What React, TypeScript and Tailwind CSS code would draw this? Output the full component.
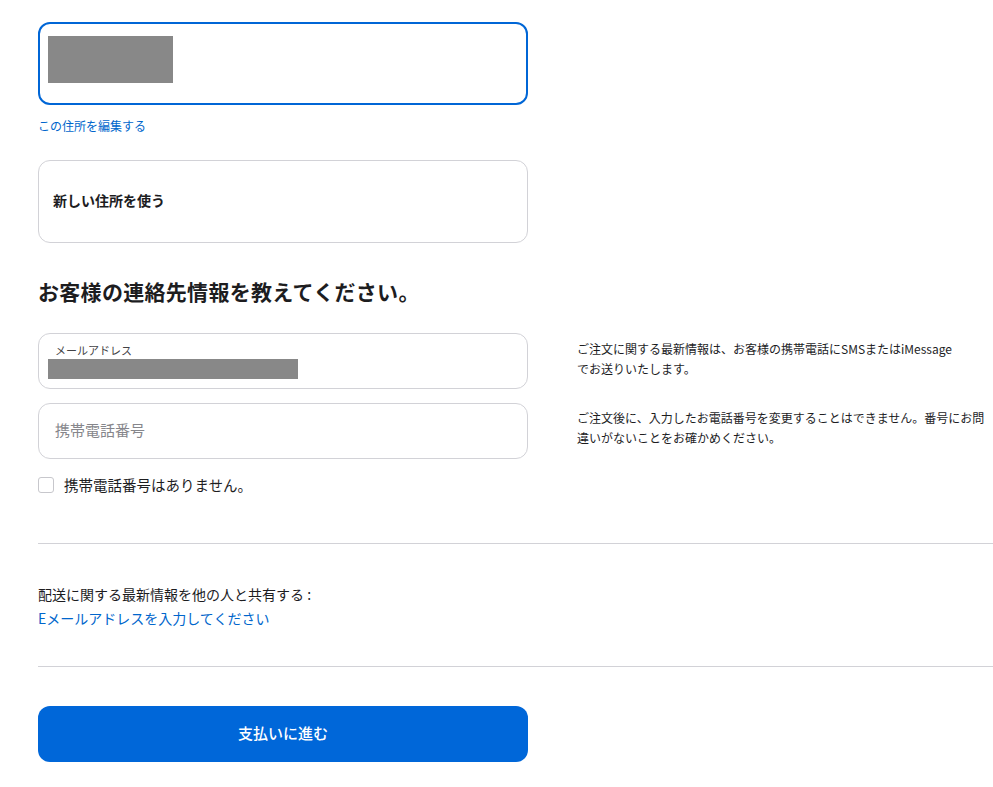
import React from "react";

export default function App() {
  return (
    <div
      className="min-h-[787px] w-[993px] bg-white text-[#1d1d1f]"
      style={{ fontFamily: '"Noto Sans CJK JP", "Noto Sans", sans-serif' }}
    >
      <div className="pl-[38px] pt-[22px]">
        {/* selected address */}
        <div className="h-[83px] w-[490px] rounded-[12px] border-2 border-[#0066d6] pl-[8px] pt-[12px]">
          <div className="h-[47px] w-[125px] bg-[#888888]" />
        </div>
        <div className="mt-[12px] text-[12px] leading-[18px] text-[#0066cc]">この住所を編集する</div>

        {/* new address */}
        <div className="mt-[25px] flex h-[83px] w-[490px] items-center rounded-[12px] border border-[#d2d2d7] pb-[4px] pl-[14px]">
          <span className="text-[14px] font-bold leading-[20px]">新しい住所を使う</span>
        </div>

        <h2 className="mt-[33px] text-[21px] font-bold leading-[30px] tracking-[0.3px]">
          お客様の連絡先情報を教えてください。
        </h2>

        <div className="mt-[27px] grid grid-cols-[490px_1fr] gap-x-[49px] gap-y-[14px]">
          <div className="h-[56px] rounded-[12px] border border-[#d2d2d7] pl-[9px] pt-[9px]">
            <div className="pl-[7px] text-[11px] leading-[14px] text-[#424245]">メールアドレス</div>
            <div className="mt-[2px] h-[20px] w-[250px] bg-[#888888]" />
          </div>
          <div className="pt-[6px] text-[12px] leading-[20px]">
            ご注文に関する最新情報は、お客様の携帯電話にSMSまたはiMessage
            <br />
            でお送りいたします。
          </div>
          <div className="flex h-[56px] items-center rounded-[12px] border border-[#d2d2d7] pb-[2px] pl-[16px]">
            <span className="text-[15px] leading-[20px] text-[#86868b]">携帯電話番号</span>
          </div>
          <div className="pt-[5px] text-[12px] leading-[20px]">
            ご注文後に、入力したお電話番号を変更することはできません。番号にお問
            <br />
            違いがないことをお確かめください。
          </div>
        </div>

        <div className="mt-[16px] flex items-center">
          <div className="h-[16px] w-[16px] rounded-[3px] border border-[#c7c7cc]" />
          <span className="ml-[10px] text-[14.5px] leading-[20px]">携帯電話番号はありません。</span>
        </div>

        <div className="mt-[48px] h-px w-[955px] bg-[#d2d2d7]" />

        <div className="mt-[38px] text-[14px] leading-[24px]">配送に関する最新情報を他の人と共有する :</div>
        <div className="text-[14px] leading-[24px] text-[#0066cc]">Eメールアドレスを入力してください</div>

        <div className="mt-[36px] h-px w-[955px] bg-[#d2d2d7]" />

        <button className="mt-[39px] flex h-[56px] w-[490px] items-center justify-center rounded-[12px] bg-[#0067d9] pb-[2px] text-[15px] font-medium leading-[20px] text-white">
          支払いに進む
        </button>
      </div>
    </div>
  );
}
